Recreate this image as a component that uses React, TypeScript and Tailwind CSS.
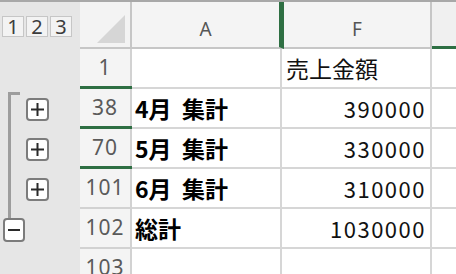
import React from "react";

type Row = {
  num: string;
  label?: string;
  value?: string;
  head?: boolean;
  green?: boolean;
  gutter?: "top" | "mid" | "end";
};

const rows: Row[] = [
  { num: "1", value: "売上金額", head: true, green: true },
  { num: "38", label: "4月 集計", value: "390000", green: true, gutter: "top" },
  { num: "70", label: "5月 集計", value: "330000", green: true, gutter: "mid" },
  { num: "101", label: "6月 集計", value: "310000", gutter: "mid" },
  { num: "102", label: "総計", value: "1030000", gutter: "end" },
  { num: "103" },
];

function PlusBox() {
  return (
    <div className="w-[23px] h-[23px] rounded-[4px] border-2 border-[#7c7c7c] bg-white flex items-center justify-center">
      <svg width="13" height="13" viewBox="0 0 13 13">
        <rect x="0" y="5.5" width="13" height="2" fill="#2a2a2a" />
        <rect x="5.5" y="0" width="2" height="13" fill="#2a2a2a" />
      </svg>
    </div>
  );
}

function Gutter({ kind }: { kind?: Row["gutter"] }) {
  if (!kind) return <div className="w-[80px] shrink-0" />;
  if (kind === "end") {
    return (
      <div className="w-[80px] shrink-0 flex flex-col">
        <div className="ml-[8px] w-[3px] h-[9px] bg-[#9d9d9d]" />
        <div className="ml-[3px] w-[22px] h-[24px] rounded-[4px] border-2 border-[#7c7c7c] bg-white flex items-center justify-center">
          <div className="w-[12px] h-[2px] bg-[#2a2a2a]" />
        </div>
      </div>
    );
  }
  return (
    <div className="w-[80px] shrink-0 flex items-center">
      <div className="w-[26px] self-stretch">
        {kind === "top" ? (
          <div className="ml-[8px] mt-[3px] w-[12px] h-[37px] border-l-[3px] border-t-[3px] border-[#9d9d9d]" />
        ) : (
          <div className="ml-[8px] w-[3px] h-full bg-[#9d9d9d]" />
        )}
      </div>
      <PlusBox />
    </div>
  );
}

export default function App() {
  return (
    <div className="w-[456px] h-[274px] overflow-hidden bg-[#e6e6e6] border-t-2 border-[#a8a8a8] font-['Noto_Sans',sans-serif]">
      {/* column header row */}
      <div className="flex h-[47px]">
        <div className="w-[80px] shrink-0 flex gap-[2px] pl-[2px] pt-[14px]">
          {["1", "2", "3"].map((n) => (
            <div
              key={n}
              className="w-[22px] h-[21px] border border-[#c6c6c6] bg-[#f3f3f3] flex items-center justify-center text-[20px] leading-none text-[#3c3c3c]"
            >
              {n}
            </div>
          ))}
        </div>
        <div className="w-[52px] shrink-0 bg-[#f3f3f3] border-r-2 border-b-2 border-[#c6c6c6]">
          <svg width="50" height="45" viewBox="0 0 50 45">
            <polygon points="45,13 45,41 17,41" fill="#d6d6d6" />
          </svg>
        </div>
        <div className="w-[152px] shrink-0 bg-[#f4f4f4] border-b-2 border-b-[#c6c6c6] border-r-[5px] border-r-[#2e6f43] flex items-center justify-center pt-[10px] text-[19px] text-[#555555]">
          A
        </div>
        <div className="w-[148px] shrink-0 bg-[#f4f4f4] border-b-2 border-r-2 border-[#c6c6c6] flex items-center justify-center pt-[10px] text-[19px] text-[#555555]">
          F
        </div>
        <div className="flex-1 bg-[#f0f0f0] border-b-[3px] border-b-[#2e6f43]" />
      </div>

      {rows.map((r) => (
        <div key={r.num} className="flex h-[40px]">
          <Gutter kind={r.gutter} />
          <div className="relative w-[52px] shrink-0 bg-[#f4f4f4] border-r-2 border-b-2 border-[#d2d2d2] flex items-center justify-center text-[21px] tracking-[1px] text-[#5a5a5a]">
            {r.num}
            {r.green && (
              <div className="absolute left-0 right-[-2px] bottom-[-3px] h-[4px] bg-[#2e6f43]" />
            )}
          </div>
          <div className="w-[150px] shrink-0 bg-white border-r-2 border-b-2 border-[#d6d6d6] flex items-center pl-[3px] font-['Noto_Sans_CJK_JP',sans-serif] font-bold text-[23px] text-black whitespace-pre">
            {r.label ? r.label.replace(" ", "  ") : ""}
          </div>
          {r.head ? (
            <div className="w-[150px] shrink-0 bg-white border-r-2 border-b-2 border-[#d6d6d6] flex items-center pl-[4px] font-['Noto_Sans_CJK_JP',sans-serif] text-[23px] text-[#111111]">
              {r.value}
            </div>
          ) : (
            <div className="w-[150px] shrink-0 bg-white border-r-2 border-b-2 border-[#d6d6d6] flex items-center justify-end pr-[4px] font-['Noto_Sans_CJK_JP',sans-serif] text-[22px] tracking-[1.5px] text-[#111111]">
              {r.value}
            </div>
          )}
          <div className="flex-1 bg-white border-b-2 border-[#d6d6d6]" />
        </div>
      ))}
    </div>
  );
}
